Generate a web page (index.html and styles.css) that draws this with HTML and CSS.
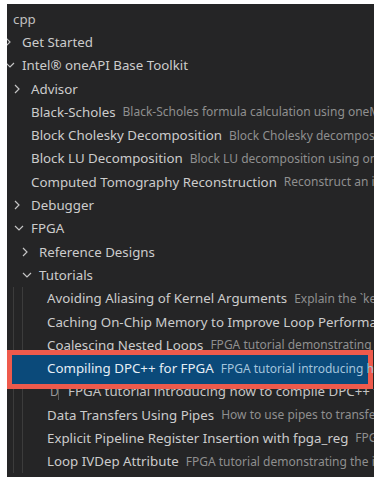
FILE: index.html
```html
<!DOCTYPE html>
<html>
<head>
<meta charset="utf-8">
<link rel="stylesheet" href="styles.css">
</head>
<body>
<div class="panel">
  <div class="row l0"><span class="label">cpp</span></div>
  <div class="row l1"><span class="chev"><svg viewBox="0 0 6 10" width="6" height="10"><path d="M1 1 L5 5 L1 9" /></svg></span><span class="label">Get Started</span></div>
  <div class="row l1"><span class="chev"><svg viewBox="0 0 10 6" width="10" height="6"><path d="M1 1 L5 5 L9 1" /></svg></span><span class="label">Intel® oneAPI Base Toolkit</span></div>
  <div class="row l2"><span class="chev"><svg viewBox="0 0 6 10" width="6" height="10"><path d="M1 1 L5 5 L1 9" /></svg></span><span class="label">Advisor</span></div>
  <div class="row l2"><span class="label">Black-Scholes</span><span class="desc">Black-Scholes formula calculation using oneMKL</span></div>
  <div class="row l2"><span class="label">Block Cholesky Decomposition</span><span class="desc">Block Cholesky decomposition using oneMKL</span></div>
  <div class="row l2"><span class="label">Block LU Decomposition</span><span class="desc">Block LU decomposition using oneMKL</span></div>
  <div class="row l2"><span class="label">Computed Tomography Reconstruction</span><span class="desc">Reconstruct an image</span></div>
  <div class="row l2"><span class="chev"><svg viewBox="0 0 6 10" width="6" height="10"><path d="M1 1 L5 5 L1 9" /></svg></span><span class="label">Debugger</span></div>
  <div class="row l2"><span class="chev"><svg viewBox="0 0 10 6" width="10" height="6"><path d="M1 1 L5 5 L9 1" /></svg></span><span class="label">FPGA</span></div>
  <div class="row l3"><span class="chev"><svg viewBox="0 0 6 10" width="6" height="10"><path d="M1 1 L5 5 L1 9" /></svg></span><span class="label">Reference Designs</span></div>
  <div class="row l3"><span class="chev"><svg viewBox="0 0 10 6" width="10" height="6"><path d="M1 1 L5 5 L9 1" /></svg></span><span class="label">Tutorials</span></div>
  <div class="row l4 guides"><span class="label">Avoiding Aliasing of Kernel Arguments</span><span class="desc">Explain the `kernel_args_restrict`</span></div>
  <div class="row l4 guides"><span class="label">Caching On-Chip Memory to Improve Loop Performance</span></div>
  <div class="row l4 guides"><span class="label">Coalescing Nested Loops</span><span class="desc">FPGA tutorial demonstrating</span></div>
  <div class="row l4 selected"><span class="label">Compiling DPC++ for FPGA</span><span class="desc">FPGA tutorial introducing how</span></div>
  <div class="row l4 guides hover"><span class="ghost">D</span><span class="tip">FPGA tutorial introducing how to compile DPC++ for FPGA</span></div>
  <div class="row l4 guides"><span class="label">Data Transfers Using Pipes</span><span class="desc">How to use pipes to transfer data</span></div>
  <div class="row l4 guides"><span class="label">Explicit Pipeline Register Insertion with fpga_reg</span><span class="desc">FPGA tutorial</span></div>
  <div class="row l4 guides"><span class="label">Loop IVDep Attribute</span><span class="desc">FPGA tutorial demonstrating the ivdep attribute</span></div>
</div>
</body>
</html>
```

FILE: styles.css
```css
html, body {
  margin: 0;
  padding: 0;
  background: #ffffff;
}
body {
  padding: 4px 7px 0 7px;
  font-family: "Noto Sans", "Open Sans", sans-serif;
}
.panel {
  width: 367px;
  height: 473px;
  background: #252526;
  overflow: hidden;
  padding-top: 3px;
  box-sizing: border-box;
}
.row {
  position: relative;
  display: flex;
  align-items: center;
  height: 23.3px;
  white-space: nowrap;
  font-size: 13.3px;
  color: #cccccc;
}
.l0 { padding-left: 6px; }
.l1 { padding-left: 15px; }
.l2 { padding-left: 24px; }
.l3 { padding-left: 32px; }
.l4 { padding-left: 40px; }
.chev {
  position: absolute;
  top: 0;
  bottom: 0;
  display: flex;
  align-items: center;
}
.l1 .chev { left: -2px; }
.l2 .chev { left: 7px; }
.l3 .chev { left: 15px; }
.chev svg path {
  fill: none;
  stroke: #c5c5c5;
  stroke-width: 1.2;
}
.label {
  color: #cccccc;
}
.l0 .label { color: #c0c0c0; }
.desc {
  margin-left: 7px;
  font-size: 12px;
  color: #8f8f8f;
}
.guides::before,
.guides::after {
  content: "";
  position: absolute;
  top: 0;
  bottom: 0;
  width: 1px;
  background: #3c3c3c;
}
.guides::before { left: 6px; }
.guides::after { left: 15px; }
.selected {
  z-index: 1;
}
.selected::after {
  content: "";
  position: absolute;
  left: 0;
  right: 1px;
  top: -6px;
  bottom: -9px;
  border: 5px solid #ee5a4c;
  background: #0b4a7a;
  z-index: -1;
}
.selected .label { color: #e6eef5; }
.selected .desc { color: #a4c4dc; }
.hover .ghost {
  margin-left: 3px;
  font-size: 12px;
  color: #9a9a9a;
  width: 8px;
}
.hover .tip {
  margin-left: 0;
  padding-left: 9px;
  border-left: 1px solid #5a5a5a;
  color: #c4c4c4;
}
```
